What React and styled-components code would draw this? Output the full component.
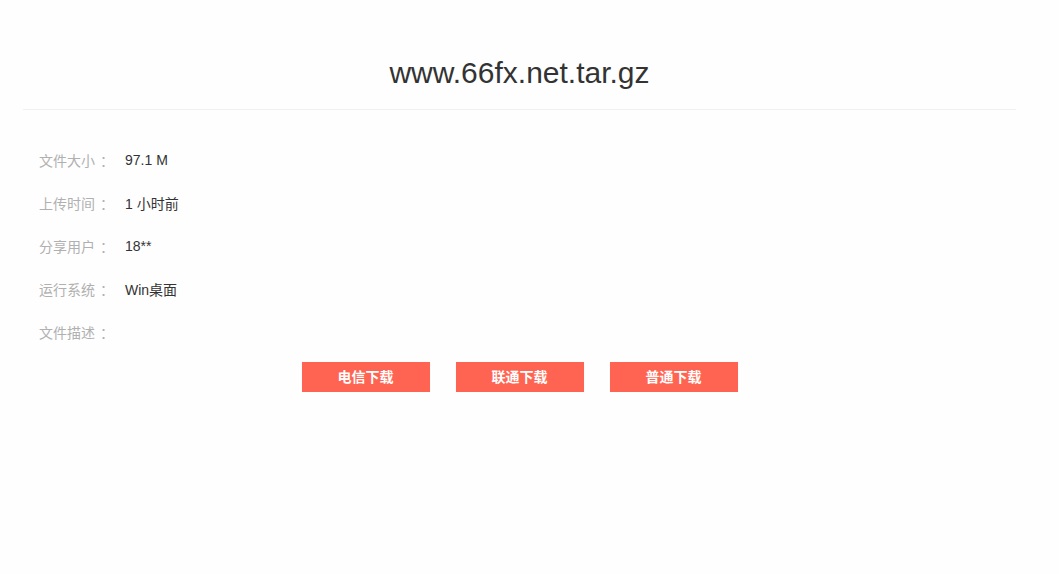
import React from 'react';
import styled, {createGlobalStyle} from 'styled-components';

const GlobalStyle = createGlobalStyle`
  html, body {
    margin: 0;
    padding: 0;
    background: #fefefe;
  }
  body {
    font-family: "Liberation Sans", "Noto Sans CJK SC", sans-serif;
  }
`;

const Page = styled.div`
  width: 993px;
  margin-left: 23px;
  padding-top: 53px;
`;

const Title = styled.h1`
  margin: 0;
  height: 56px;
  font-size: 30px;
  font-weight: normal;
  line-height: 40px;
  text-align: center;
  color: #333;
  border-bottom: 1px solid #f0f0f0;
`;

const InfoList = styled.div`
  display: flex;
  flex-direction: column;
  padding: 28px 0 0 16px;
`;

const Row = styled.div`
  display: flex;
  align-items: center;
  height: 43.2px;
  font-size: 14px;
`;

const Label = styled.span`
  width: 86px;
  color: #b0b0b0;
`;

// full-width colon sits centred in its cell in the original
const Colon = styled.span`
  padding-left: 5px;
`;

const Value = styled.span`
  color: #333;
`;

const Buttons = styled.div`
  display: flex;
  justify-content: center;
  gap: 26px;
  margin-top: 8px;
`;

const Button = styled.a`
  display: flex;
  align-items: center;
  justify-content: center;
  width: 128px;
  height: 30px;
  padding-bottom: 1px;
  box-sizing: border-box;
  background: #ff6452;
  color: #fff;
  font-size: 14px;
  font-weight: bold;
  text-decoration: none;
  box-shadow: 0 1px 1px rgba(0, 0, 0, 0.08);
  cursor: pointer;
`;

const info = [
  ['文件大小', '97.1 M'],
  ['上传时间', '1 小时前'],
  ['分享用户', '18**'],
  ['运行系统', 'Win桌面'],
  ['文件描述', '']
];

const buttons = ['电信下载', '联通下载', '普通下载'];

export default function App() {
  return (
    <>
      <GlobalStyle />
      <Page>
        <Title>www.66fx.net.tar.gz</Title>
        <InfoList>
          {info.map(([label, value]) => (
            <Row key={label}>
              <Label>
                {label}
                <Colon>：</Colon>
              </Label>
              <Value>{value}</Value>
            </Row>
          ))}
        </InfoList>
        <Buttons>
          {buttons.map(name => (
            <Button key={name}>{name}</Button>
          ))}
        </Buttons>
      </Page>
    </>
  );
}
